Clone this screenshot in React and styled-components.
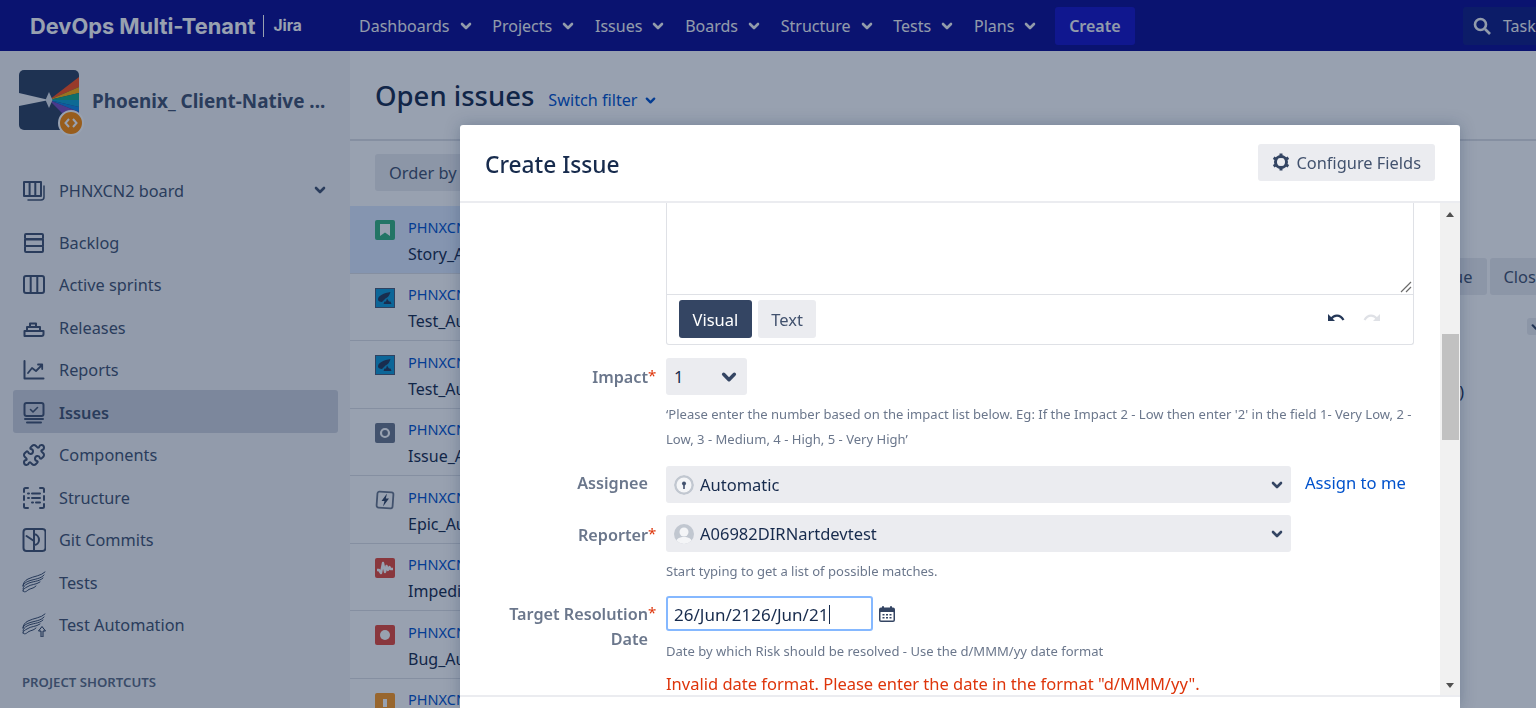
import React from 'react'
import styled, { createGlobalStyle } from 'styled-components'
import { Puzzle } from 'lucide-react'

const FONT = '"Noto Sans", "Open Sans", sans-serif'

const GlobalStyle = createGlobalStyle`
  html, body {
    margin: 0;
    height: 100%;
    overflow: hidden;
    background: #fff;
    font-family: ${FONT};
    color: #172b4d;
  }
  * { box-sizing: border-box; }
`

const Page = styled.div`
  width: 1536px;
  height: 708px;
  overflow: hidden;
  display: flex;
  flex-direction: column;
`

const Nav = styled.header`
  height: 51px;
  flex: none;
  display: flex;
  align-items: center;
  background: #0b0b91;
  color: #f4f5f7;
`

const Brand = styled.div`
  width: 349px;
  flex: none;
  padding-left: 30px;
  display: flex;
  align-items: center;
  font-family: Inter, sans-serif;
  font-weight: 700;
  font-size: 21.8px;
  color: #fff;
  white-space: nowrap;
  span {
    font-size: 15.5px;
    padding-left: 9px;
    margin-left: 8px;
    line-height: 22px;
    border-left: 1px solid #fff;
  }
`

const NavList = styled.nav`
  display: flex;
  align-items: center;
`

const NavItem = styled.div`
  display: flex;
  align-items: center;
  gap: 10px;
  padding: 0 10.8px 0 10px;
  font-size: 16px;
  white-space: nowrap;
`

const CreateButton = styled.div`
  height: 38px;
  margin-left: 8px;
  padding: 0 14px;
  display: flex;
  align-items: center;
  background: #1512c7;
  border-radius: 3px;
  font-size: 16px;
  font-weight: 600;
`

const Search = styled.div`
  margin-left: auto;
  width: 73px;
  height: 38px;
  padding-left: 9px;
  display: flex;
  align-items: center;
  gap: 11px;
  background: #0f1b84;
  border-radius: 3px 0 0 3px;
  overflow: hidden;
  font-size: 16px;
`

const Columns = styled.div`
  flex: 1;
  display: flex;
  min-height: 0;
`

const Sidebar = styled.aside`
  width: 350px;
  flex: none;
  padding: 19px 12px 0 13px;
  background: #f4f5f7;
  color: #42526e;
`

const Project = styled.div`
  display: flex;
  align-items: center;
  gap: 13px;
  padding-left: 6px;
  height: 60px;
  font-size: 18.9px;
  font-weight: 700;
  white-space: nowrap;
`

const ProjectName = styled.span`
  padding-top: 2px;
`

const ProjectLogo = styled.div`
  position: relative;
  width: 60px;
  height: 60px;
  flex: none;
`

const LogoBadge = styled.div`
  position: absolute;
  right: -5px;
  bottom: -6px;
  width: 26px;
  height: 26px;
  border-radius: 50%;
  background: #ff8b00;
  border: 2px solid #fff;
  display: flex;
  align-items: center;
  justify-content: center;
  color: #fff;
`

const BoardRow = styled.div`
  margin-top: 38px;
  margin-bottom: 9px;
  height: 43px;
  display: flex;
  align-items: center;
  justify-content: space-between;
  padding-right: 12px;
`

const SideItem = styled.div`
  height: 42.5px;
  padding: 3px 0 0 9px;
  display: flex;
  align-items: center;
  gap: 13px;
  border-radius: 3px;
  font-size: 16.3px;
  font-weight: ${p => (p.$active ? 600 : 400)};
  background: ${p => (p.$active ? '#cfd3dc' : 'transparent')};
`

const SideLabel = styled.div`
  margin: 28px 0 0 9px;
  font-size: 13.2px;
  font-weight: 600;
  color: #5e6c84;
`

const Main = styled.main`
  flex: 1;
  min-width: 0;
  display: flex;
  flex-direction: column;
  background: #fff;
`

const MainHead = styled.div`
  height: 90px;
  flex: none;
  padding: 0 25px;
  display: flex;
  align-items: center;
  gap: 14px;
  border-bottom: 2px solid #dfe1e6;
`

const Title = styled.h1`
  margin: 0;
  font-size: 27.5px;
  font-weight: 500;
`

const SwitchFilter = styled.a`
  display: flex;
  align-items: center;
  gap: 7px;
  margin-top: 10px;
  font-size: 16.2px;
  color: #0052cc;
`

const Toolbar = styled.div`
  height: 65px;
  flex: none;
  padding: 13px 25px 0;
`

const GreyButton = styled.div`
  display: inline-flex;
  align-items: center;
  height: 37px;
  padding: 0 14px;
  background: #ebecf0;
  border-radius: 3px;
  font-size: 16.4px;
  color: #42526e;
  white-space: nowrap;
`

const Content = styled.div`
  flex: 1;
  display: flex;
  min-height: 0;
`

const IssueList = styled.div`
  width: 420px;
  flex: none;
`

const IssueRow = styled.div`
  height: 67.5px;
  padding: 14px 25px 0;
  display: flex;
  gap: 13px;
  border-bottom: 1px solid #dfe1e6;
  background: ${p => (p.$selected ? '#deebff' : 'transparent')};
`

const IssueText = styled.div`
  font-size: 16px;
  line-height: 27px;
  margin-top: -7.5px;
  white-space: nowrap;
  small {
    display: block;
    font-size: 14.5px;
    line-height: 28px;
    color: #0052cc;
  }
`

const TypeIcon = styled.div`
  width: 20px;
  height: 20px;
  flex: none;
  border-radius: 2px;
  display: flex;
  align-items: center;
  justify-content: center;
  background: ${p => p.$bg};
`

const Detail = styled.div`
  flex: 1;
  min-width: 0;
  overflow: hidden;
  padding-top: 52px;
`

const ActionRow = styled.div`
  display: flex;
  justify-content: flex-end;
  gap: 3px;
  margin-right: -68px;
`

const SmallChevron = styled.div`
  margin: 23px 0 0 757px;
  width: 18px;
  height: 17px;
  border-radius: 3px;
  background: #ebecf0;
  display: flex;
  align-items: center;
  justify-content: center;
`

const DetailNote = styled.div`
  margin-top: 46px;
  width: 694px;
  text-align: right;
  font-size: 16px;
`

const Blanket = styled.div`
  position: fixed;
  inset: 0;
  background: rgba(9, 30, 66, 0.42);
`

const Dialog = styled.section`
  position: fixed;
  left: 460px;
  top: 125px;
  width: 1000px;
  height: 583px;
  display: flex;
  flex-direction: column;
  background: #fff;
  border-radius: 3px 3px 0 0;
  box-shadow: 0 0 16px rgba(9, 30, 66, 0.25);
`

const DialogHead = styled.div`
  height: 78px;
  flex: none;
  display: flex;
  align-items: center;
  justify-content: space-between;
  padding: 0 25px;
  border-bottom: 2px solid #ebecf0;
`

const DialogTitle = styled.h2`
  margin: 2px 0 0;
  font-size: 22.7px;
  font-weight: 500;
  color: #172b4d;
`

const ConfigButton = styled(GreyButton)`
  gap: 6px;
  margin-top: -2px;
`

const DialogBody = styled.div`
  flex: 1;
  display: flex;
  min-height: 0;
  border-bottom: 2px solid #ebecf0;
`

const Form = styled.div`
  flex: 1;
  min-width: 0;
  overflow: hidden;
  padding-right: 26px;
`

const Editor = styled.div`
  margin-left: 206px;
  border: 1px solid #dfe1e6;
  border-top: 0;
  border-radius: 0 0 3px 3px;
`

const EditArea = styled.div`
  position: relative;
  height: 91px;
`

const ResizeGrip = styled.svg`
  position: absolute;
  right: 0;
  bottom: 0;
`

const EditorBar = styled.div`
  height: 50px;
  padding: 5px 12px 0;
  border-top: 1px solid #dfe1e6;
  display: flex;
  gap: 6px;
`

const ModeTab = styled.div`
  height: 38px;
  padding: 0 13.5px;
  display: flex;
  align-items: center;
  border-radius: 3px;
  font-size: 16.5px;
  background: ${p => (p.$active ? '#344563' : '#ebecf0')};
  color: ${p => (p.$active ? '#fff' : '#42526e')};
`

const History = styled.div`
  margin-left: auto;
  margin-right: 20px;
  display: flex;
  gap: 18px;
  height: 23px;
  padding-top: 13px;
  overflow: hidden;
`

const Field = styled.div`
  display: grid;
  grid-template-columns: 188px 1fr;
  column-gap: 18px;
  margin-top: ${p => p.$top}px;
`

const Label = styled.label`
  position: relative;
  justify-self: end;
  text-align: right;
  padding-top: ${p => p.$pad || 5}px;
  line-height: 25px;
  font-size: 16.2px;
  font-weight: 600;
  color: #6b778c;
`

const Star = styled.i`
  position: absolute;
  left: 100%;
  top: ${p => (p.$pad || 5) - 1}px;
  font-style: normal;
  font-size: 15px;
  font-weight: 400;
  line-height: 22px;
  color: #de350b;
`

const Control = styled.div`
  min-width: 0;
`

const ControlLine = styled.div`
  display: flex;
  align-items: center;
`

const Select = styled.div`
  width: ${p => p.$w}px;
  height: 37px;
  padding: 0 ${p => p.$pr || 8}px 0 8px;
  display: flex;
  align-items: center;
  gap: 6px;
  background: #ebecf0;
  border-radius: 3px;
  font-size: 16.5px;
  color: #172b4d;
  svg:last-child { margin-left: auto; }
`

const Avatar = styled.div`
  width: 20px;
  height: 20px;
  flex: none;
  border-radius: 50%;
  overflow: hidden;
`

const AssignLink = styled.a`
  margin-left: 14px;
  margin-top: -4px;
  font-size: 16.6px;
  color: #0052cc;
`

const Help = styled.div`
  margin-top: ${p => p.$top || 7}px;
  font-size: 13.05px;
  line-height: 25px;
  color: #6b778c;
`

const DateInput = styled.div`
  width: 207px;
  height: 35px;
  padding: 1px 6px 0;
  display: flex;
  align-items: center;
  border: 2px solid #85b8ff;
  border-radius: 3px;
  font-size: 17px;
  color: #172b4d;
`

const Caret = styled.span`
  width: 1px;
  height: 19px;
  margin-left: 1px;
  background: #172b4d;
`

const CalendarSlot = styled.div`
  margin-left: 5px;
  width: 18px;
  display: flex;
`

const ErrorText = styled.div`
  margin-top: 7px;
  font-size: 16.5px;
  line-height: 25px;
  color: #de350b;
  white-space: nowrap;
`

const ScrollTrack = styled.div`
  width: 20px;
  flex: none;
  display: flex;
  flex-direction: column;
  align-items: center;
  background: #f1f1f1;
`

const ScrollArrow = styled.div`
  width: 0;
  height: 0;
  flex: none;
  border-left: 4.5px solid transparent;
  border-right: 4.5px solid transparent;
  ${p => (p.$down
    ? 'border-top: 5px solid #505050; margin-top: auto; margin-bottom: 7px;'
    : 'border-bottom: 5px solid #505050; margin-top: 9px;')}
`

const ScrollThumb = styled.div`
  width: 17px;
  height: 106px;
  flex: none;
  margin-top: ${p => p.$top}px;
  background: #c1c1c1;
`

const DialogFoot = styled.div`
  height: 11px;
  flex: none;
`

const Chevron = ({ size = 12, color = 'currentColor', width = 2.6 }) => (
  <svg width={size} height={size} viewBox="0 0 12 12" fill="none" style={{ flex: 'none' }}>
    <path d="M2 4l4 4 4-4" stroke={color} strokeWidth={width} strokeLinecap="round" strokeLinejoin="round" />
  </svg>
)

const line = { fill: 'none', stroke: 'currentColor', strokeWidth: 2, strokeLinecap: 'round', strokeLinejoin: 'round' }

const SideSvg = ({ children }) => (
  <svg width="24" height="24" viewBox="0 0 24 24" style={{ flex: 'none' }}>{children}</svg>
)

const BoardIcon = () => (
  <SideSvg>
    <path {...line} d="M2 3h17v14H2zM7.6 3v14M13.3 3v14" />
    <path {...line} strokeWidth="1.5" d="M22 7v11a3 3 0 0 1-3 3H6" />
  </SideSvg>
)
const BacklogIcon = () => (
  <SideSvg>
    <path {...line} d="M4 3h16a1 1 0 0 1 1 1v3a1 1 0 0 1-1 1H4a1 1 0 0 1-1-1V4a1 1 0 0 1 1-1zM3 8.5h18V15H3zM4 15h16a1 1 0 0 1 1 1v4a1 1 0 0 1-1 1H4a1 1 0 0 1-1-1v-4" />
  </SideSvg>
)
const SprintIcon = () => (
  <SideSvg>
    <rect {...line} x="2" y="3" width="20" height="17" rx="2" />
    <path {...line} d="M8.7 3v17M15.3 3v17" />
  </SideSvg>
)
const ReleaseIcon = () => (
  <SideSvg>
    <path {...line} d="M2.5 20h17a2 2 0 0 0 2-2v-3h-19zM5 15v-4h13v4M8 11V7.500h6V11" />
  </SideSvg>
)
const ReportIcon = () => (
  <SideSvg>
    <path {...line} d="M2.5 3v17.5h19" />
    <path {...line} d="M6 15l4-5 4 3 6-6M16 6.5h4.2V11" strokeWidth="1.8" />
  </SideSvg>
)
const IssuesIcon = () => (
  <SideSvg>
    <rect {...line} x="2.5" y="2" width="19" height="13" rx="2" />
    <path {...line} d="M8.5 8.5l2.5 2.5 4.5-4.5" strokeWidth="1.6" />
    <path {...line} d="M3 18h18M5 21.5h14" />
  </SideSvg>
)
const StructureIcon = () => (
  <SideSvg>
    <path {...line} d="M6 2H3.500A1.500 1.500 0 0 0 2 3.500V6M18 2h2.500A1.500 1.500 0 0 1 22 3.500V6M6 22H3.500A1.500 1.500 0 0 1 2 20.500V18M18 22h2.500a1.500 1.500 0 0 0 1.500-1.500V18M2 10v4M22 10v4" />
    <path {...line} d="M6 7.5h1M10 7.5h8M6 12h1M10 12h8M10 16.5h1M14 16.5h4" />
  </SideSvg>
)
const GitIcon = () => (
  <SideSvg>
    <rect {...line} x="1.5" y="1" width="22" height="22" rx="3" />
    <path {...line} d="M12 1v22M4.5 8l7.5 5M12 6a6 6 0 0 1 5 6 5 5 0 0 1-5 5" />
  </SideSvg>
)

// feathers of the wing, tip top right, root bottom left
const WING = [
  'M23 1C19 5 12 5 6 8 3 9.5 1 12 1 15',
  'M22 4C19 8 12 8 7 10 4 11 1 13 1 15',
  'M21 7C17 11 10 10 5 13 3 14 1 16 1 18',
  'M18 11C14 14 9 13 5 16 3 17 1 18 1 20',
  'M14 15C11 18 9 17 6 19 4 21 2 21.5 1 20',
]
const Wing = () => WING.map(d => (
  <path key={d} d={d} fill="none" stroke="#253858" strokeWidth="0.9" strokeLinecap="round" />
))
const TestsIcon = () => <SideSvg><Wing /></SideSvg>
const AutomationIcon = () => (
  <SideSvg>
    <Wing />
    <path d="M21 24v-6h2.5L20 13.500 16.500 18H19v6z" fill="#f4f5f7" stroke="#253858" strokeWidth="1" />
  </SideSvg>
)
const ComponentsIcon = () => <Puzzle size={24} strokeWidth={2} style={{ flex: 'none' }} />

const SIDE_ITEMS = [
  ['Backlog', BacklogIcon],
  ['Active sprints', SprintIcon],
  ['Releases', ReleaseIcon],
  ['Reports', ReportIcon],
  ['Issues', IssuesIcon, true],
  ['Components', ComponentsIcon],
  ['Structure', StructureIcon],
  ['Git Commits', GitIcon],
  ['Tests', TestsIcon],
  ['Test Automation', AutomationIcon],
]

const LogoArt = () => (
  <svg width="60" height="60" viewBox="0 0 60 60">
    <rect width="60" height="60" rx="5" fill="#2d405e" />
    <path d="M0 23L30 30 0 36z" fill="#f4f5f7" />
    <path d="M30 30L60 7v10z" fill="#ff4e19" />
    <path d="M30 30L60 17v6z" fill="#ffb006" />
    <path d="M30 30L60 23v7z" fill="#13aa87" />
    <path d="M30 30h30v7z" fill="#11a0d0" />
    <path d="M30 30L60 37v5z" fill="#1185e4" />
    <path d="M30 30L60 42 50 50z" fill="#7a4ec1" />
    <path d="M30 22l3.5 8-3.5 8-3.5-8z" fill="#dfe3ea" />
  </svg>
)

const StoryGlyph = () => (
  <svg width="12" height="14" viewBox="0 0 12 14"><path d="M1 1h10v12L6 9.5 1 13z" fill="#fff" /></svg>
)
const TestGlyph = () => (
  <svg width="20" height="20" viewBox="0 0 20 20">
    <rect x="0.5" y="0.5" width="19" height="19" fill="#0f9ad6" stroke="#4b5c77" />
    <path d="M3 11.5C3 7.5 9 5 15.500 4c-1 3.500-2.500 5.500-5 6.500L7 14c-2.500 0-4-1-4-2.500z" fill="#253858" />
    <path d="M12 10.5l2 3h1.500l1 2.500H8.500l1-2.500H11z" fill="#253858" />
  </svg>
)
const DotGlyph = ({ ring }) => (
  <svg width="12" height="12" viewBox="0 0 12 12">
    {ring
      ? <circle cx="6" cy="6" r="4" fill="none" stroke="#fff" strokeWidth="2.2" />
      : <circle cx="6" cy="6" r="5" fill="#fff" />}
  </svg>
)
const EpicGlyph = () => (
  <svg width="20" height="20" viewBox="0 0 20 20">
    <rect x="2" y="2" width="16" height="16" rx="2" transform="rotate(4 10 10)" fill="none" stroke="#6b778c" strokeWidth="1.8" />
    <path d="M12 3.5L6.5 11h3L8 16.500 14 8.500h-3.200z" fill="#344563" />
  </svg>
)
const WaveGlyph = () => (
  <svg width="18" height="16" viewBox="0 0 18 16">
    <path d="M1 10h2L5 13l2-10 2 9 1.500-6 1.500 4 1.500-3 1 2H17" fill="none" stroke="#fff" strokeWidth="2.4" strokeLinejoin="round" />
  </svg>
)
const BarGlyph = () => (
  <svg width="4" height="12" viewBox="0 0 4 12"><rect width="4" height="8" y="2" fill="#fff" /></svg>
)

const ISSUES = [
  { key: 'PHNXCN2-1187', summary: 'Story_Automation', bg: '#36b37e', glyph: <StoryGlyph />, selected: true },
  { key: 'PHNXCN2-1186', summary: 'Test_Automation', bg: '#0f9ad6', glyph: <TestGlyph /> },
  { key: 'PHNXCN2-1185', summary: 'Test_Automation', bg: '#0f9ad6', glyph: <TestGlyph /> },
  { key: 'PHNXCN2-1184', summary: 'Issue_Automation', bg: '#6b778c', glyph: <DotGlyph ring /> },
  { key: 'PHNXCN2-1183', summary: 'Epic_Automation', bg: 'transparent', glyph: <EpicGlyph /> },
  { key: 'PHNXCN2-1182', summary: 'Impediment_Automation', bg: '#e5493a', glyph: <WaveGlyph /> },
  { key: 'PHNXCN2-1181', summary: 'Bug_Automation', bg: '#e5493a', glyph: <DotGlyph /> },
  { key: 'PHNXCN2-1180', summary: 'Risk_Automation', bg: '#ff991f', glyph: <BarGlyph /> },
]

const NAV = ['Dashboards', 'Projects', 'Issues', 'Boards', 'Structure', 'Tests', 'Plans']

const Gear = () => (
  <svg width="18" height="18" viewBox="0 0 18 18">
    <circle cx="9" cy="9" r="5.5" fill="none" stroke="#344563" strokeWidth="3" />
    <path d="M9 9L9 0.5M9 9l7.400-4.200M9 9l7.400 4.200M9 9v8.500M9 9L1.600 13.200M9 9L1.600 4.800" stroke="#344563" strokeWidth="3" />
    <circle cx="9" cy="9" r="4" fill="#ebecf0" />
  </svg>
)

const Calendar = () => (
  <svg width="18" height="18" viewBox="0 0 18 18">
    <path d="M3 2.5h12a2 2 0 0 1 2 2V15a2 2 0 0 1-2 2H3a2 2 0 0 1-2-2V4.500a2 2 0 0 1 2-2z" fill="#344563" />
    <rect x="4" y="1" width="2" height="3" rx="1" fill="#344563" />
    <rect x="12" y="1" width="2" height="3" rx="1" fill="#344563" />
    <rect x="2.5" y="7" width="13" height="8.5" rx="0.5" fill="#fff" />
    <path d="M4.5 9h2v1.500h-2zM8 9h2v1.500H8zM11.500 9h2v1.500h-2zM4.500 12h2v1.500h-2zM8 12h2v1.500H8zM11.500 12h2v1.500h-2z" fill="#344563" />
  </svg>
)

// undo / redo: the bar clips them a few pixels below their top, as in the editor
const Arrow = ({ color, flip }) => (
  <svg width="18" height="12" viewBox="0 0 18 12" style={{ display: 'block', transform: flip ? 'scaleX(-1)' : undefined }}>
    <path d="M1 1v7h7z" fill={color} />
    <path d="M4 6C7 1.5 13 1 16.5 7" fill="none" stroke={color} strokeWidth="2.2" />
  </svg>
)

const AutoAvatar = () => (
  <svg width="20" height="20" viewBox="0 0 20 20">
    <circle cx="10" cy="10" r="10" fill="#c1c7d0" />
    <circle cx="10" cy="10" r="7.5" fill="#f4f5f7" />
    <circle cx="10" cy="8.5" r="2" fill="#42526e" />
    <rect x="9.2" y="9" width="1.6" height="5" fill="#42526e" />
  </svg>
)

const UserAvatar = () => (
  <svg width="20" height="20" viewBox="0 0 20 20">
    <rect width="20" height="20" fill="#c1c7d0" />
    <circle cx="10" cy="8" r="4.5" fill="#f4f5f7" />
    <path d="M1 20c1-6 5-7 9-7s8 1 9 7z" fill="#f4f5f7" />
  </svg>
)

export default function App() {
  return (
    <Page>
      <GlobalStyle />
      <Nav>
        <Brand>DevOps Multi-Tenant<span>Jira</span></Brand>
        <NavList>
          {NAV.map(name => (
            <NavItem key={name}>{name}<Chevron /></NavItem>
          ))}
          <CreateButton>Create</CreateButton>
        </NavList>
        <Search>
          <svg width="20" height="20" viewBox="0 0 20 20" fill="none" stroke="#f4f5f7" strokeWidth="2.6" style={{ flex: 'none' }}>
            <circle cx="8.5" cy="8.5" r="5.5" />
            <path d="M13 13l5 5" />
          </svg>
          Task
        </Search>
      </Nav>
      <Columns>
        <Sidebar>
          <Project>
            <ProjectLogo>
              <LogoArt />
              <LogoBadge>
                <svg width="14" height="10" viewBox="0 0 14 10" fill="none" stroke="#fff" strokeWidth="2"><path d="M5 1L1.500 5 5 9M9 1l3.500 4L9 9" /></svg>
              </LogoBadge>
            </ProjectLogo>
            <ProjectName>Phoenix_ Client-Native ...</ProjectName>
          </Project>
          <BoardRow>
            <SideItem><BoardIcon />PHNXCN2 board</SideItem>
            <Chevron />
          </BoardRow>
          {SIDE_ITEMS.map(([name, Icon, active]) => (
            <SideItem key={name} $active={active}><Icon />{name}</SideItem>
          ))}
          <SideLabel>PROJECT SHORTCUTS</SideLabel>
        </Sidebar>
        <Main>
          <MainHead>
            <Title>Open issues</Title>
            <SwitchFilter>Switch filter <Chevron size={11} /></SwitchFilter>
          </MainHead>
          <Toolbar><GreyButton>Order by</GreyButton></Toolbar>
          <Content>
            <IssueList>
              {ISSUES.map(issue => (
                <IssueRow key={issue.key} $selected={issue.selected}>
                  <TypeIcon $bg={issue.bg}>{issue.glyph}</TypeIcon>
                  <IssueText><small>{issue.key}</small>{issue.summary}</IssueText>
                </IssueRow>
              ))}
            </IssueList>
            <Detail>
              <ActionRow>
                <GreyButton>Resolve Issue</GreyButton>
                <GreyButton>Close Issue</GreyButton>
              </ActionRow>
              <SmallChevron><Chevron size={10} color="#344563" /></SmallChevron>
              <DetailNote>Attachments (0)</DetailNote>
            </Detail>
          </Content>
        </Main>
      </Columns>

      <Blanket />
      <Dialog>
        <DialogHead>
          <DialogTitle>Create Issue</DialogTitle>
          <ConfigButton><Gear />Configure Fields</ConfigButton>
        </DialogHead>
        <DialogBody>
          <Form>
            <Editor>
              <EditArea>
                <ResizeGrip width="14" height="14" viewBox="0 0 14 14" fill="none" stroke="#6b6b6b" strokeWidth="1.2">
                  <path d="M2 12L12 2M7 12l5-5" />
                </ResizeGrip>
              </EditArea>
              <EditorBar>
                <ModeTab $active>Visual</ModeTab>
                <ModeTab>Text</ModeTab>
                <History>
                  <Arrow color="#253858" />
                  <Arrow color="#dfe1e6" flip />
                </History>
              </EditorBar>
            </Editor>
            <Field $top={13}>
              <Label $pad={7}>Impact<Star $pad={7}>*</Star></Label>
              <Control>
                <Select $w={81} $pr={10}>1<Chevron size={16} color="#344563" /></Select>
                <Help>‘Please enter the number based on the impact list below. Eg: If the Impact 2 - Low then enter '2' in the field 1- Very Low, 2 - Low, 3 - Medium, 4 - High, 5 - Very High’</Help>
              </Control>
            </Field>
            <Field $top={14}>
              <Label>Assignee</Label>
              <ControlLine>
                <Select $w={625}>
                  <Avatar><AutoAvatar /></Avatar>
                  Automatic
                  <Chevron size={12} color="#344563" />
                </Select>
                <AssignLink>Assign to me</AssignLink>
              </ControlLine>
            </Field>
            <Field $top={12}>
              <Label $pad={8}>Reporter<Star $pad={8}>*</Star></Label>
              <Control>
                <Select $w={625}>
                  <Avatar><UserAvatar /></Avatar>
                  A06982DIRNartdevtest
                  <Chevron size={12} color="#344563" />
                </Select>
                <Help>Start typing to get a list of possible matches.</Help>
              </Control>
            </Field>
            <Field $top={12}>
              <Label $pad={6}>Target Resolution<Star $pad={6}>*</Star><br />Date</Label>
              <Control>
                <ControlLine>
                  <DateInput>26/Jun/2126/Jun/21<Caret /></DateInput>
                  <CalendarSlot><Calendar /></CalendarSlot>
                </ControlLine>
                <Help $top={8}>Date by which Risk should be resolved - Use the d/MMM/yy date format</Help>
                <ErrorText>Invalid date format. Please enter the date in the format "d/MMM/yy".</ErrorText>
              </Control>
            </Field>
          </Form>
          <ScrollTrack>
            <ScrollArrow />
            <ScrollThumb $top={117} />
            <ScrollArrow $down />
          </ScrollTrack>
        </DialogBody>
        <DialogFoot />
      </Dialog>
    </Page>
  )
}
